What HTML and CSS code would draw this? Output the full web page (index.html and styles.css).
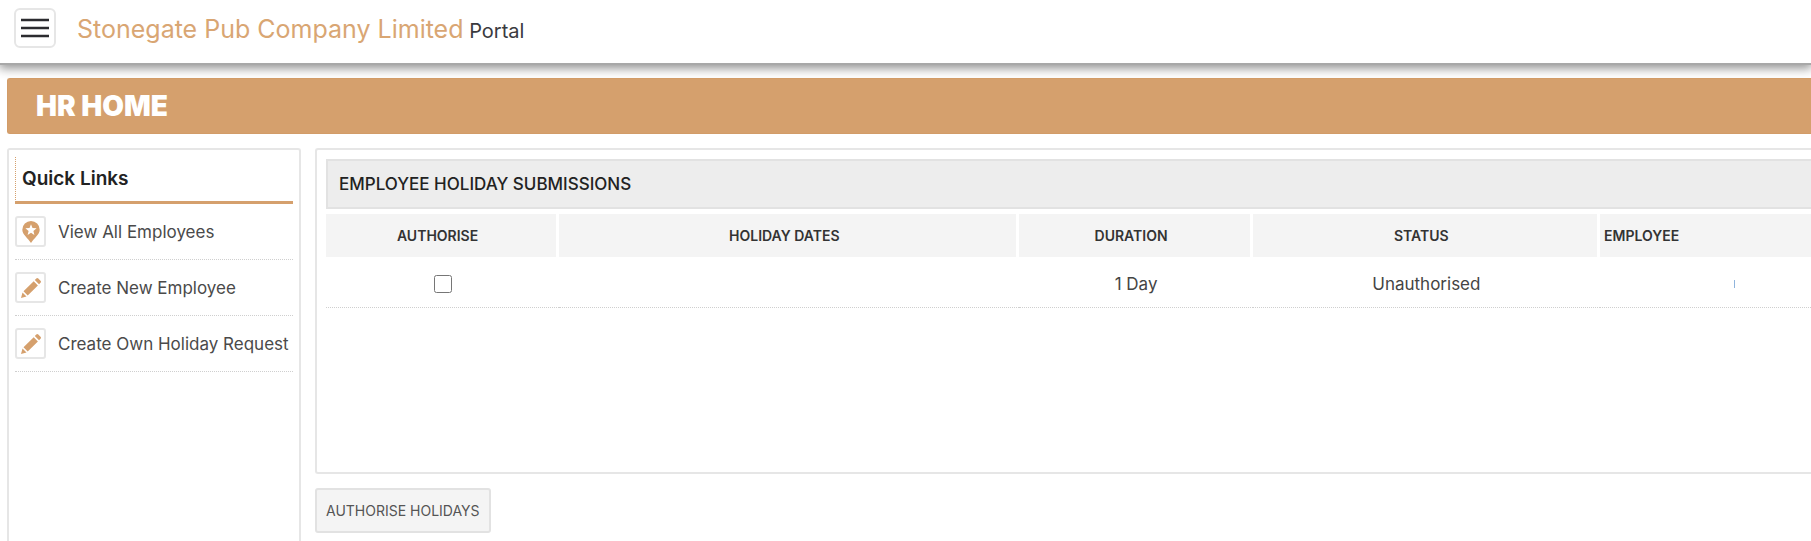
FILE: index.html
```html
<!DOCTYPE html>
<html lang="en">
<head>
  <meta charset="UTF-8" />
  <meta name="viewport" content="width=device-width, initial-scale=1" />
  <title>HR Home - Stonegate Pub Company Limited Portal</title>
  <link rel="stylesheet" href="styles.css">
</head>
<body>
  <header class="header">
    <button type="button" class="menu-button" aria-label="Menu">
      <svg width="28" height="20" viewBox="0 0 28 20" aria-hidden="true">
        <path d="M0 2h28M0 10h28M0 18h28" stroke="#2b2b2f" stroke-width="2.5" />
      </svg>
    </button>
    <div class="brand"><span class="company">Stonegate Pub Company Limited</span> Portal</div>
  </header>

  <h1 class="page-title">HR HOME</h1>

  <div class="layout">
    <nav class="sidebar" aria-labelledby="quickLinks">
      <h2 id="quickLinks">Quick Links</h2>
      <ul class="links">
        <li>
          <a href="#">
            <span class="icon">
              <svg width="18" height="22" viewBox="0 0 18 22" aria-hidden="true">
                <path d="M9 0a8.7 8.7 0 0 0-8.7 8.7C.3 13.500 6 17 9 22c3-5 8.700-8.500 8.700-13.300A8.700 8.700 0 0 0 9 0z" fill="#d5a06d" />
                <path d="M9 3.200l1.500 3.800 4.100.3-3.200 2.600 1 4L9 11.700l-3.400 2.200 1-4L3.400 7.300l4.100-.3z" fill="#fff" />
              </svg>
            </span>
            View All Employees
          </a>
        </li>
        <li>
          <a href="#">
            <span class="icon">
              <svg width="20" height="20" viewBox="0 0 20 20" aria-hidden="true">
                <path d="M0 20l1.500-5.500 4 4zM2.500 13.300L12.700 3.200l4.200 4.200L6.700 17.500zM13.800 2.100L15.300.6q1-1 2 0l2.200 2.200q1 1 0 2L18 6.300z" fill="#d5a06d" />
              </svg>
            </span>
            Create New Employee
          </a>
        </li>
        <li>
          <a href="#">
            <span class="icon">
              <svg width="20" height="20" viewBox="0 0 20 20" aria-hidden="true">
                <path d="M0 20l1.500-5.500 4 4zM2.500 13.300L12.700 3.200l4.200 4.200L6.700 17.500zM13.800 2.100L15.300.6q1-1 2 0l2.200 2.200q1 1 0 2L18 6.300z" fill="#d5a06d" />
              </svg>
            </span>
            Create Own Holiday Request
          </a>
        </li>
      </ul>
    </nav>

    <main class="content">
      <section class="panel">
        <h3>EMPLOYEE HOLIDAY SUBMISSIONS</h3>
        <table class="holidays">
          <colgroup>
            <col class="col-authorise">
            <col class="col-dates">
            <col class="col-duration">
            <col class="col-status">
            <col>
          </colgroup>
          <thead>
            <tr>
              <th>AUTHORISE</th>
              <th>HOLIDAY DATES</th>
              <th>DURATION</th>
              <th>STATUS</th>
              <th class="employee">EMPLOYEE</th>
            </tr>
          </thead>
          <tbody>
            <tr>
              <td><input type="checkbox" aria-label="Authorise"></td>
              <td></td>
              <td>1 Day</td>
              <td>Unauthorised</td>
              <td class="employee"><span class="name-mark"></span></td>
            </tr>
          </tbody>
        </table>
      </section>
      <button type="button" class="authorise">AUTHORISE HOLIDAYS</button>
    </main>
  </div>
</body>
</html>
```
FILE: styles.css
```css
* {
  margin: 0;
  padding: 0;
  box-sizing: border-box;
}
body {
  font-family: Inter, sans-serif;
  font-size: 17px;
  background: #fff;
  color: #444;
  min-height: 100vh;
  display: flex;
  flex-direction: column;
  overflow-x: hidden;
}
.header {
  display: flex;
  align-items: flex-start;
  gap: 21px;
  height: 65px;
  padding: 8px 14px;
  border-bottom: 2px solid #a8a8a8;
  box-shadow: 0 2px 10px 1px rgba(0, 0, 0, 0.45);
}
.menu-button {
  display: flex;
  align-items: center;
  justify-content: center;
  width: 42px;
  height: 40px;
  background: #fff;
  border: 2px solid #e6e6e6;
  border-radius: 6px;
  cursor: pointer;
}
.brand {
  font-size: 20px;
  line-height: 42px;
  color: #3a3a3e;
}
.company {
  font-size: 25px;
  color: #d9a673;
}
.page-title {
  margin: 13px 0 14px 7px;
  padding: 0 28px;
  background: #d5a06d;
  border: 1px solid #d29c68;
  border-right: 0;
  border-radius: 3px 0 0 3px;
  color: #fff;
  font-size: 28px;
  font-weight: 900;
  line-height: 54px;
}
.layout {
  flex: 1;
  display: flex;
  gap: 14px;
  padding-left: 7px;
}
.sidebar {
  width: 294px;
  flex-shrink: 0;
  padding: 7px 6px;
  border: 2px solid #e6e6e6;
  border-bottom: 0;
  border-radius: 3px 3px 0 0;
}
.sidebar h2 {
  padding-left: 6px;
  border-left: 1px dotted #d5a06d;
  border-bottom: 3px solid #d5a06d;
  color: #222;
  font-size: 19px;
  font-weight: 600;
  line-height: 44px;
}
.links {
  list-style: none;
}
.links a {
  display: flex;
  align-items: center;
  gap: 12px;
  height: 56px;
  border-bottom: 1px dotted #cfcfcf;
  color: #4a4a4a;
  text-decoration: none;
  white-space: nowrap;
}
.icon {
  display: flex;
  align-items: center;
  justify-content: center;
  width: 31px;
  height: 31px;
  border: 2px solid #e6e6e6;
  border-radius: 3px;
}
.content {
  flex: 1;
  min-width: 0;
}
.panel {
  height: 326px;
  padding: 9px 0 0 9px;
  border: 2px solid #e6e6e6;
  border-right: 0;
  border-radius: 3px 0 0 3px;
}
.panel h3 {
  padding-left: 11px;
  background: #ededed;
  border: 2px solid #e2e2e2;
  border-right: 0;
  color: #222;
  font-size: 17px;
  font-weight: 500;
  line-height: 46px;
}
.holidays {
  width: 100%;
  margin-top: 5px;
  table-layout: fixed;
  border-collapse: separate;
  border-spacing: 0;
}
.col-authorise,
.col-duration {
  width: 15.7%;
}
.col-dates {
  width: 31%;
}
.col-status {
  width: 23.4%;
}
.holidays th {
  height: 43px;
  padding-right: 7px;
  background: #f4f4f4;
  border-right: 3px solid #fff;
  color: #333;
  font-size: 14px;
  font-weight: 600;
}
.holidays td {
  height: 51px;
  padding-top: 3px;
  border-bottom: 1px dotted #cfcfcf;
  text-align: center;
}
.holidays .employee {
  padding-left: 4px;
  border-right: 0;
  text-align: left;
}
.holidays input {
  display: block;
  width: 18px;
  height: 18px;
  margin: 0 auto;
}
.name-mark {
  display: block;
  width: 1px;
  height: 8px;
  margin-left: 130px;
  background: #8fb4dc;
}
.authorise {
  height: 45px;
  margin-top: 14px;
  padding: 0 9px;
  background: #f4f4f4;
  border: 2px solid #e2e2e2;
  border-radius: 3px;
  color: #555;
  font-family: inherit;
  font-size: 14px;
  cursor: pointer;
}
```
